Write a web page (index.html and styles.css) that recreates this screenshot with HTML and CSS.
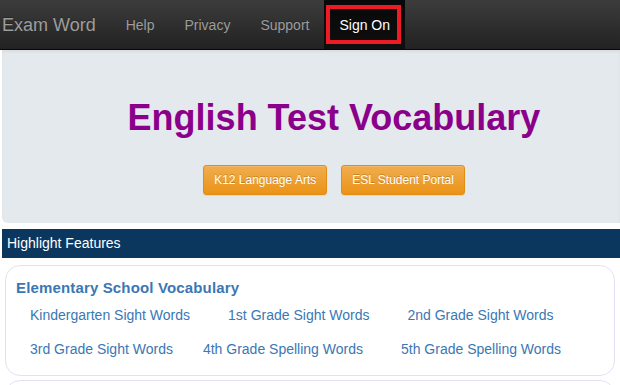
FILE: index.html
```html
<!DOCTYPE html>
<html lang="en">
<head>
<meta charset="utf-8">
<title>Exam Word</title>
<link rel="stylesheet" href="styles.css">
</head>
<body>
<nav class="navbar">
  <a class="brand" href="#">Exam Word</a>
  <ul class="nav">
    <li><a class="nav-link" href="#">Help</a></li>
    <li><a class="nav-link" href="#">Privacy</a></li>
    <li><a class="nav-link" href="#">Support</a></li>
    <li><a class="nav-link active" href="#">Sign On<span class="mark"></span></a></li>
  </ul>
</nav>
<section class="jumbotron">
  <h1 class="title">English Test Vocabulary</h1>
  <div class="actions">
    <a class="btn" href="#">K12 Language Arts</a>
    <a class="btn" href="#">ESL Student Portal</a>
  </div>
</section>
<div class="bar">Highlight Features</div>
<div class="card">
  <h2 class="card-title">Elementary School Vocabulary</h2>
  <div class="links">
    <div class="row row-a">
      <a href="#">Kindergarten Sight Words</a>
      <a href="#">1st Grade Sight Words</a>
      <a href="#">2nd Grade Sight Words</a>
    </div>
    <div class="row row-b">
      <a href="#">3rd Grade Sight Words</a>
      <a href="#">4th Grade Spelling Words</a>
      <a href="#">5th Grade Spelling Words</a>
    </div>
  </div>
</div>
<div class="card card-next"></div>
</body>
</html>
```
FILE: styles.css
```css
* { box-sizing: border-box; }
html, body { margin: 0; padding: 0; }
body {
  font-family: "Liberation Sans", Arial, sans-serif;
  font-size: 14px;
  line-height: 20px;
  color: #333;
  background: #fff;
  overflow: hidden;
}
a { text-decoration: none; }

.navbar {
  display: flex;
  align-items: stretch;
  height: 50px;
  background: linear-gradient(to bottom, #3c3c3c 0, #222 100%);
  border-bottom: 1px solid #080808;
}
.brand {
  font-size: 18px;
  line-height: 20px;
  padding: 15px 15px 14px 2px;
  color: #9d9d9d;
  text-shadow: 0 -1px 0 rgba(0,0,0,.25);
}
.nav {
  display: flex;
  list-style: none;
  margin: 0;
  padding: 0;
}
.nav-link {
  position: relative;
  display: block;
  padding: 15px 15px 14px;
  line-height: 20px;
  font-size: 14px;
  color: #9d9d9d;
  text-shadow: 0 -1px 0 rgba(0,0,0,.25);
}
.nav-link.active {
  color: #fff;
  background: linear-gradient(to bottom, #080808 0, #0f0f0f 100%);
}
.mark {
  position: absolute;
  left: 2px;
  right: 4px;
  top: 5px;
  bottom: 5px;
  border: 4px solid #ed1c24;
}

.jumbotron {
  margin-left: 2px;
  height: 173px;
  padding: 48px 0 0 46px;
  background: #e4e9ed;
  border-radius: 0 0 0 6px;
  box-shadow: inset 0 2px 3px rgba(0,0,0,.05);
  text-align: center;
}
.title {
  margin: 0;
  font-size: 36px;
  line-height: 40px;
  font-weight: bold;
  color: #8b008b;
}
.actions {
  display: flex;
  justify-content: center;
  gap: 14px;
  margin-top: 27px;
}
.btn {
  display: inline-block;
  height: 30px;
  padding: 5px 10px;
  font-size: 12px;
  line-height: 18px;
  color: #fff;
  text-shadow: 0 -1px 0 rgba(0,0,0,.2);
  background: linear-gradient(to bottom, #f0ad4e 0, #eb9316 100%);
  border: 1px solid #e38d13;
  border-radius: 3px;
  box-shadow: inset 0 1px 0 rgba(255,255,255,.15), 0 1px 1px rgba(0,0,0,.075);
}

.bar {
  margin: 6px 0 0 2px;
  height: 29px;
  padding: 4px 5px;
  line-height: 21px;
  font-size: 14px;
  color: #fff;
  background: #0b375f;
}

.card {
  margin: 7px 5px 0;
  height: 111px;
  padding: 12px 10px 0;
  border: 1px solid #e6def7;
  border-radius: 15px;
}
.card-next {
  margin-top: 4px;
  height: 40px;
}
.card-title {
  margin: 0;
  font-size: 15px;
  line-height: 20px;
  font-weight: bold;
  color: #3a77b4;
  letter-spacing: 0.15px;
}
.links {
  display: flex;
  flex-direction: column;
  gap: 14px;
  margin-top: 7px;
  padding-left: 14px;
}
.row {
  display: flex;
  gap: 38px;
}
.row-b a:first-child { margin-right: -8px; }
.row a {
  font-size: 14px;
  line-height: 20px;
  color: #3a77b4;
}
```
